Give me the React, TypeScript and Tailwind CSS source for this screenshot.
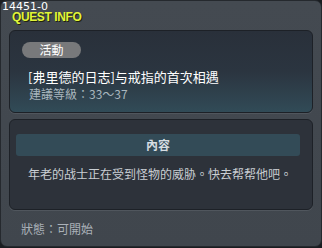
import React from "react";

export default function App() {
  const cjk = { fontFamily: '"Noto Sans CJK TC", "Noto Sans CJK SC", sans-serif' };
  return (
    <div className="w-[322px] h-[248px] bg-[#1a1d21]">
      <div
        className="relative w-[322px] h-[247px] rounded-[7px] border border-[#25292e] bg-gradient-to-b from-[#444a51] to-[#40464d] flex flex-col"
        style={cjk}
      >
        <div className="h-[29px] relative">
          <div
            className="absolute left-[1px] top-[1px] text-[11px] leading-[9px] text-white"
            style={{ fontFamily: '"DejaVu Sans", sans-serif' }}
          >
            14451-0
          </div>
          <div
            className="absolute left-[11px] top-[12px] text-[12px] leading-[9px] font-bold text-[#e0f53a] tracking-[-0.4px]"
            style={{ fontFamily: '"Liberation Sans", sans-serif', textShadow: "1px 1px 0 #20240a" }}
          >
            QUEST INFO
          </div>
        </div>
        <div className="mx-[8px] h-[83px] rounded-[6px] border border-[#1d2127] shadow-[0_1px_0_#50565d] bg-gradient-to-b from-[#29303a] via-[#2b3540] to-[#314b57] flex flex-col px-[12px] pt-[11px]">
          <div className="w-[59px] h-[16px] rounded-full bg-[#78797b] flex items-center justify-center text-[12px] leading-none text-white">
            活動
          </div>
          <div className="mt-[11px] ml-[6px] text-[13px] leading-[16px] text-white">
            [弗里德的日志]与戒指的首次相遇
          </div>
          <div className="mt-[1px] ml-[7px] text-[12px] leading-[16px] text-[#a9b6be]">
            建議等級：33～37
          </div>
        </div>
        <div className="mt-[6px] mx-[8px] h-[91px] rounded-[6px] border border-[#1d2127] shadow-[0_1px_0_#50565d] bg-[#2d323a] flex flex-col pt-[14px] pl-[6px] pr-[12px]">
          <div className="h-[22px] rounded-[3px] bg-[#334b57] flex items-center justify-center text-[12px] font-bold text-[#d6dde2]">
            內容
          </div>
          <div className="mt-[10px] ml-[12px] text-[12px] leading-[16px] text-[#c9ced3]">
            年老的战士正在受到怪物的威胁。快去帮帮他吧。
          </div>
        </div>
        <div className="mt-[11px] ml-[20px] text-[12px] leading-[16px] text-[#aab1b8]">
          狀態：可開始
        </div>
      </div>
    </div>
  );
}
